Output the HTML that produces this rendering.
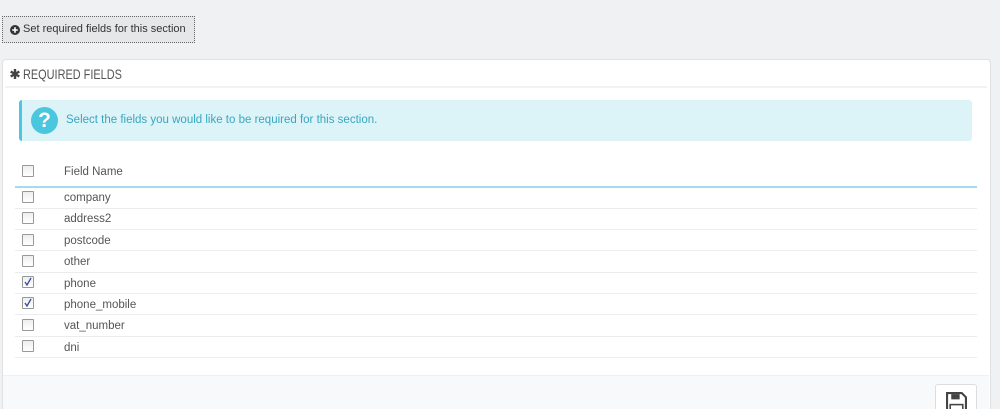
<!DOCTYPE html>
<html><head><style>
html,body{margin:0;width:1000px;height:409px;overflow:hidden}
body{background:#eff1f2;font-family:"Liberation Sans",sans-serif;position:relative;color:#555}
.btn{position:absolute;left:2px;top:16px;width:191px;height:25px;border:1px dotted #666;background:#e6e7e8;font-size:11px;color:#333;line-height:25px;box-sizing:content-box}
.btn svg{position:absolute;left:7px;top:8px}
.btn span{position:absolute;left:20px}
.panel{position:absolute;left:2px;top:59px;width:987px;height:360px;background:#fff;border:1px solid #dfe1e3;border-radius:4px}
.hd{position:absolute;left:23px;top:66px;font-family:"Liberation Sans Narrow","Liberation Sans",sans-serif;font-size:14px;color:#555;transform:scaleX(.78);transform-origin:left}
.hline{position:absolute;left:5px;top:86px;width:982px;height:2px;background:#f1f2f3}
.alert{position:absolute;left:19px;top:100px;width:950px;height:41px;background:#dcf3f8;border-left:3px solid #4bc6df;border-radius:3px}
.alert .ic{position:absolute;left:9px;top:7px;width:27px;height:27px;border-radius:50%;background:#4bc6df;color:#fff;font-weight:bold;font-size:21px;text-align:center;line-height:27px}
.alert .t{position:absolute;left:44px;top:14px;font-size:11.5px;color:#3aa6bf}
.cb{position:absolute;left:22px;width:10px;height:10px;border:1px solid #999;background:linear-gradient(#eee,#fff);border-radius:1px}
.lbl{position:absolute;left:64px;font-size:11.5px;color:#555}
.rl{position:absolute;left:15px;width:962px;height:1px;background:#eaedef}
.foot{position:absolute;left:3px;top:375px;width:986px;height:40px;background:#f8f9fb;border-top:1px solid #eef0f2}
.save{position:absolute;left:935px;top:384px;width:40px;height:30px;border:1px solid #ddd;border-radius:3px;background:#fff}
</style></head><body>
<div class="btn"><svg width="10" height="10" viewBox="0 0 10 10"><circle cx="5" cy="5" r="5" fill="#333"/><path d="M5 2.2v5.6M2.2 5h5.6" stroke="#fff" stroke-width="1.6"/></svg><span>Set required fields for this section</span></div>
<div class="panel"></div>
<svg style="position:absolute;left:10px;top:69px" width="10" height="10" viewBox="0 0 10 10"><path d="M5 0v10M0.7 2.5l8.6 5M0.7 7.5l8.6-5" stroke="#444" stroke-width="2.4"/></svg>
<div class="hd">REQUIRED FIELDS</div>
<div class="hline"></div>
<div class="alert"><div class="ic">?</div><div class="t">Select the fields you would like to be required for this section.</div></div>
<div class="cb" style="top:165px"></div><div class="lbl" style="top:166px">Field Name</div>
<div class="rl" style="top:186px;height:2px;background:#a6d8ee"></div>
<div class="cb" style="top:191px"></div><div class="lbl" style="top:192px">company</div><div class="rl" style="top:208px"></div>
<div class="cb" style="top:212px"></div><div class="lbl" style="top:213px">address2</div><div class="rl" style="top:229px"></div>
<div class="cb" style="top:234px"></div><div class="lbl" style="top:235px">postcode</div><div class="rl" style="top:250px"></div>
<div class="cb" style="top:255px"></div><div class="lbl" style="top:256px">other</div><div class="rl" style="top:272px"></div>
<div class="cb" style="top:276px"><svg width="10" height="10" style="position:absolute;left:0;top:0"><path d="M2 5l2 3 4-7" stroke="#3a4a99" stroke-width="1.3" fill="none"/></svg></div><div class="lbl" style="top:278px">phone</div><div class="rl" style="top:293px"></div>
<div class="cb" style="top:297px"><svg width="10" height="10" style="position:absolute;left:0;top:0"><path d="M2 5l2 3 4-7" stroke="#3a4a99" stroke-width="1.3" fill="none"/></svg></div><div class="lbl" style="top:299px">phone_mobile</div><div class="rl" style="top:314px"></div>
<div class="cb" style="top:319px"></div><div class="lbl" style="top:320px">vat_number</div><div class="rl" style="top:336px"></div>
<div class="cb" style="top:340px"></div><div class="lbl" style="top:342px">dni</div><div class="rl" style="top:357px"></div>
<div class="foot"></div>
<div class="save"><svg style="position:absolute;left:10px;top:7px" width="21" height="21" viewBox="0 0 20 20"><path d="M1 1h14l4 4v14H1z" fill="none" stroke="#444" stroke-width="2"/><rect x="5" y="2" width="8" height="5" fill="#444"/><rect x="4" y="12" width="12" height="6" fill="none" stroke="#444" stroke-width="1.5"/></svg></div>
</body></html>
